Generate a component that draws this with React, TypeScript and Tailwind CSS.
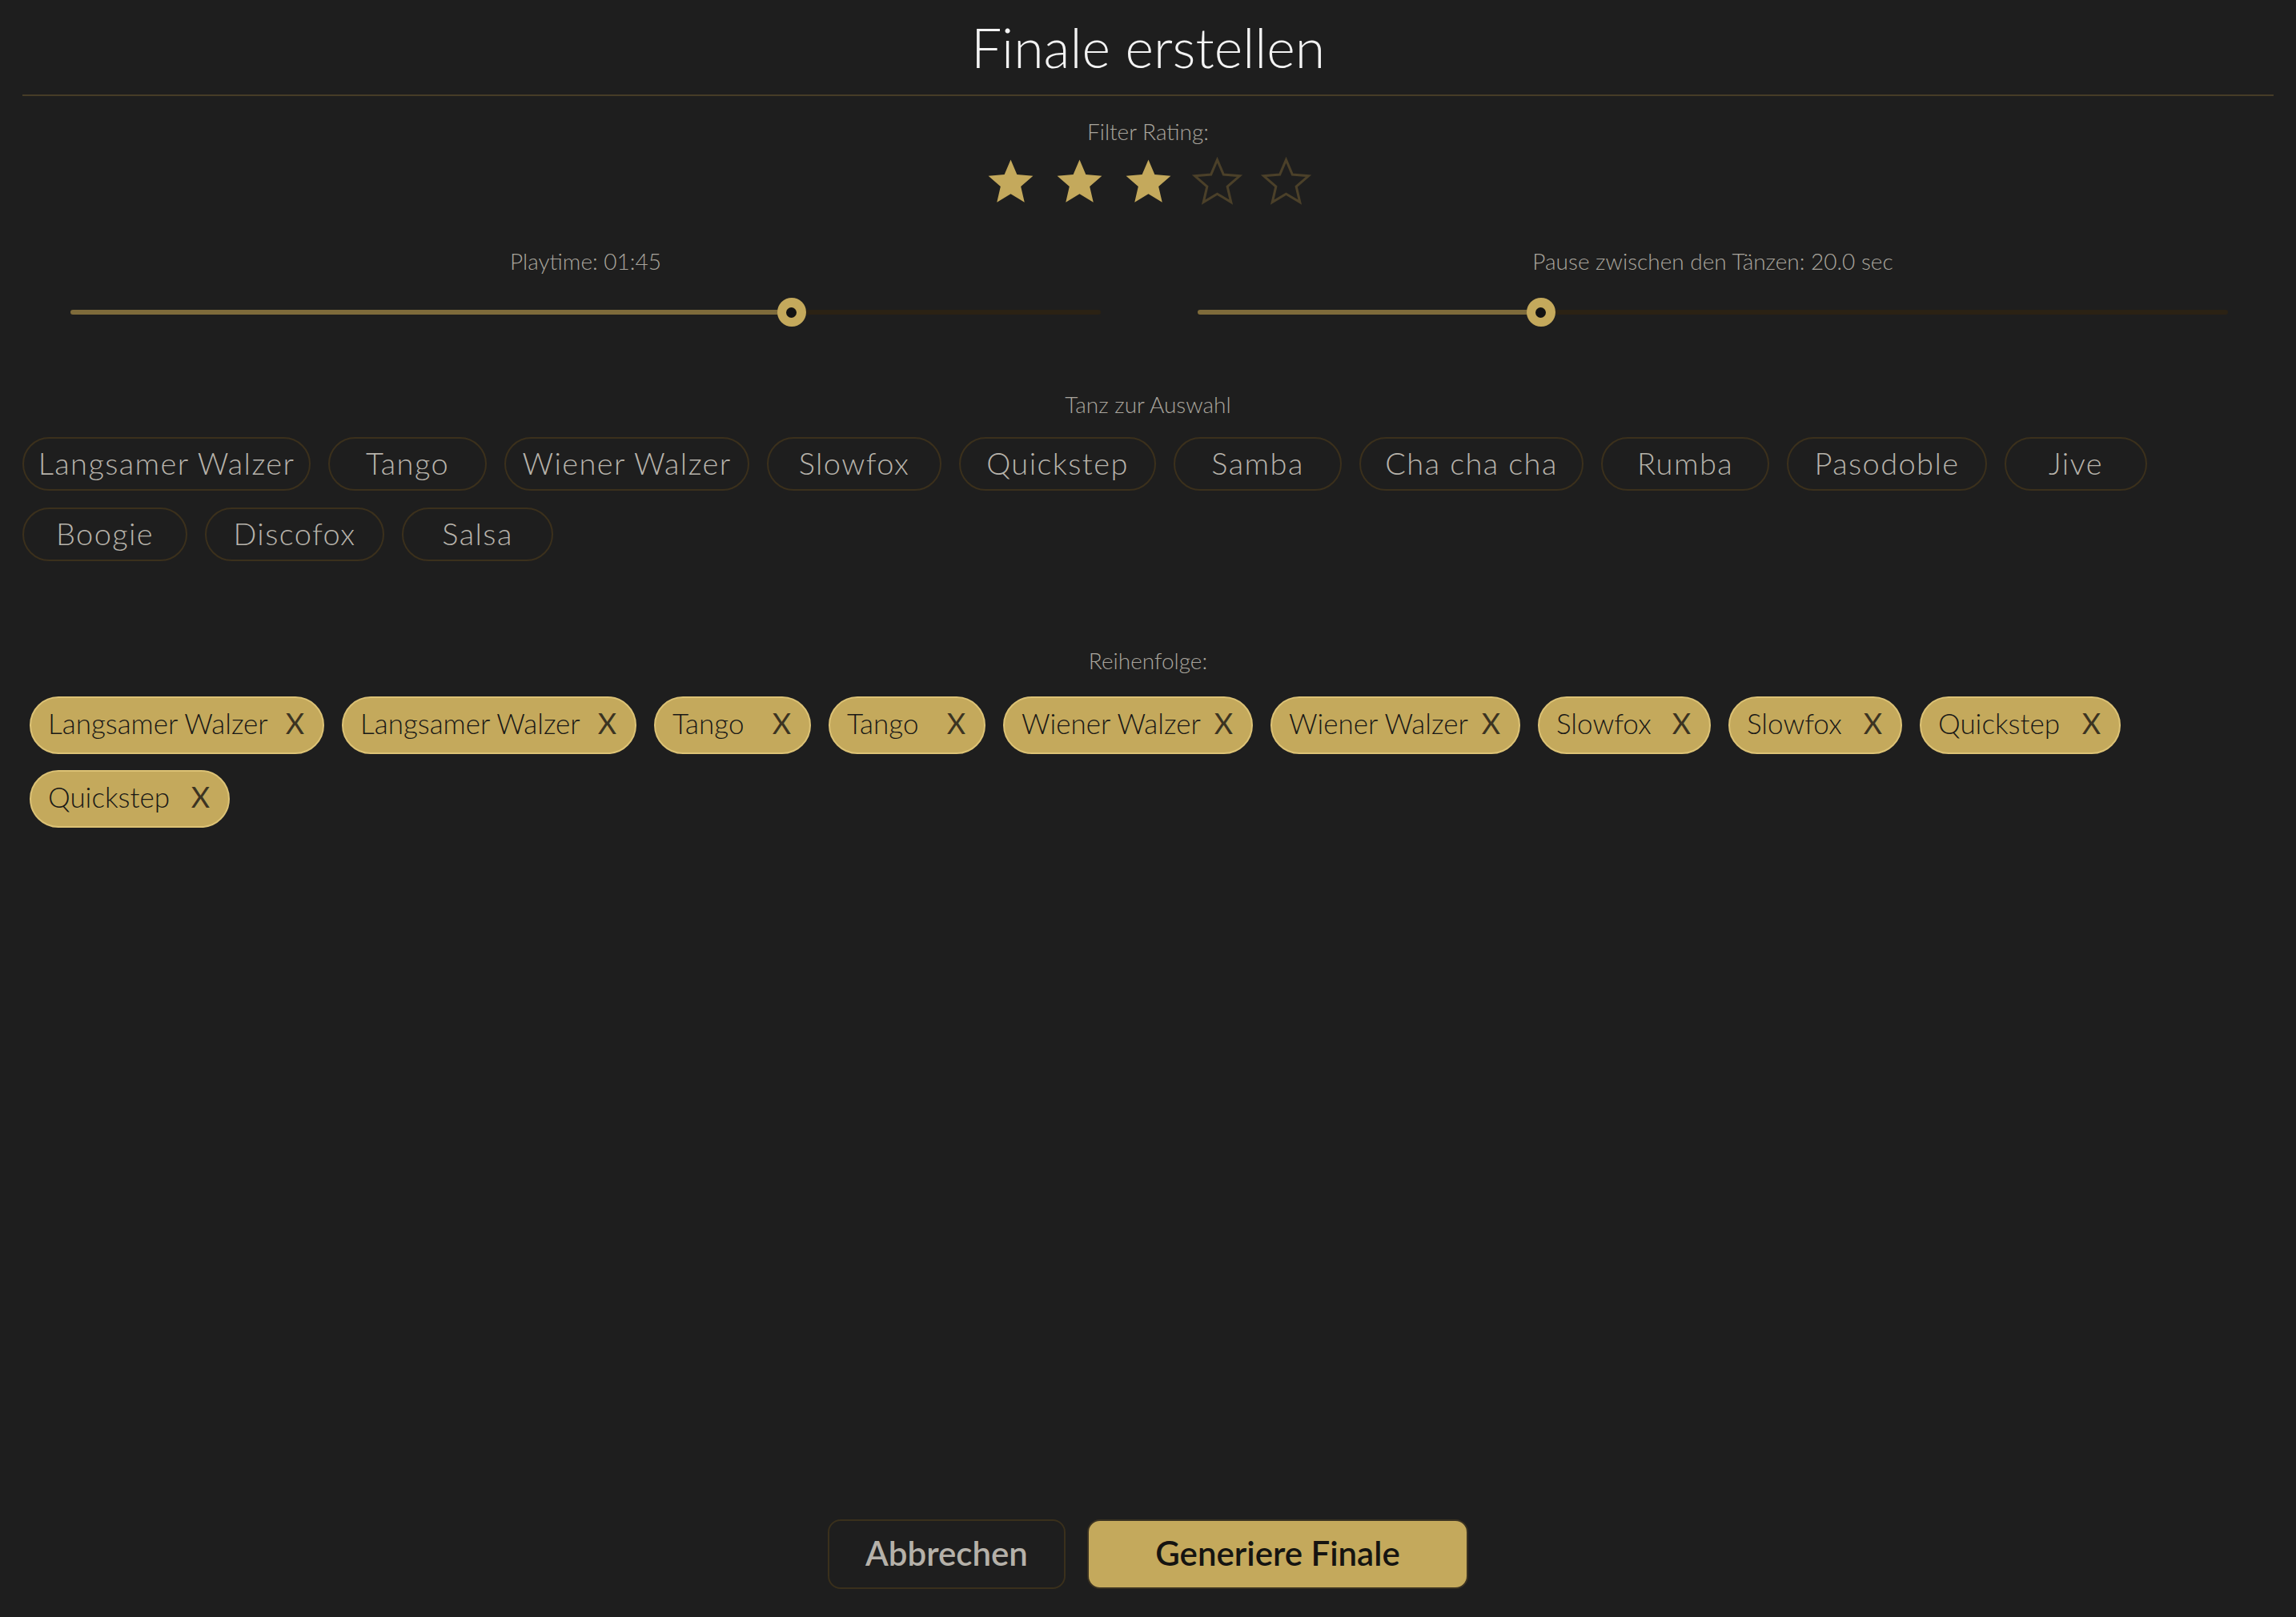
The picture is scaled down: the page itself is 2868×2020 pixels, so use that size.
import React from "react";

const STAR = "M12 17.27 18.18 21l-1.64-7.03L22 9.24l-7.19-.61L12 2 9.19 8.63 2 9.24l5.46 4.73L5.82 21z";

function Star({ filled }: { filled: boolean }) {
  return (
    <svg viewBox="0 0 24 24" className="h-[67px] w-[67px] overflow-visible">
      {filled ? (
        <path d={STAR} fill="#c4a95c" />
      ) : (
        <path d={STAR} fill="none" stroke="#4b4029" strokeWidth={1.1} strokeLinejoin="miter" strokeMiterlimit={10} />
      )}
    </svg>
  );
}

function Slider({ label, pct }: { label: string; pct: number }) {
  return (
    <div className="flex flex-col items-center">
      <div className="text-[28px] leading-[32px] font-light text-[#a9a59d]">{label}</div>
      <div className="relative mt-[30px] flex h-[36px] w-full items-center">
        <div className="h-[6px] w-full overflow-hidden rounded-full bg-[#2b2214]">
          <div className="h-full bg-[#7e6b3b]" style={{ width: pct + "%" }} />
        </div>
        <div
          className="absolute top-0 -ml-[18px] flex h-[36px] w-[36px] items-center justify-center rounded-full bg-[#c4a95c]"
          style={{ left: pct + "%" }}
        >
          <div className="h-[13px] w-[13px] rounded-full bg-[#121212]" />
        </div>
      </div>
    </div>
  );
}

const dances: { name: string; w: string }[] = [
  { name: "Langsamer Walzer", w: "w-[360px]" },
  { name: "Tango", w: "w-[198px]" },
  { name: "Wiener Walzer", w: "w-[306px]" },
  { name: "Slowfox", w: "w-[218px]" },
  { name: "Quickstep", w: "w-[246px]" },
  { name: "Samba", w: "w-[210px]" },
  { name: "Cha cha cha", w: "w-[280px]" },
  { name: "Rumba", w: "w-[210px]" },
  { name: "Pasodoble", w: "w-[250px]" },
  { name: "Jive", w: "w-[178px]" },
  { name: "Boogie", w: "w-[206px]" },
  { name: "Discofox", w: "w-[224px]" },
  { name: "Salsa", w: "w-[189px]" },
];

const order: { name: string; w: string }[] = [
  { name: "Langsamer Walzer", w: "w-[368px]" },
  { name: "Langsamer Walzer", w: "w-[368px]" },
  { name: "Tango", w: "w-[196px]" },
  { name: "Tango", w: "w-[196px]" },
  { name: "Wiener Walzer", w: "w-[312px]" },
  { name: "Wiener Walzer", w: "w-[312px]" },
  { name: "Slowfox", w: "w-[216px]" },
  { name: "Slowfox", w: "w-[217px]" },
  { name: "Quickstep", w: "w-[251px]" },
  { name: "Quickstep", w: "w-[250px]" },
];

export default function App() {
  return (
    <div
      className="flex h-[2020px] flex-col bg-[#1e1e1e] px-[28px]"
      style={{ fontFamily: "Lato, 'Noto Sans', sans-serif" }}
    >
      <div className="flex h-[120px] items-center justify-center border-b-2 border-[#463c27]">
        <h1 className="text-[68px] leading-none font-light text-[#f3f3f3]">Finale erstellen</h1>
      </div>

      <div className="mt-[28px] flex flex-col items-center">
        <div className="text-[28px] leading-[32px] font-light text-[#a9a59d]">Filter Rating:</div>
        <div className="mt-[14px] flex gap-[19px]">
          {[1, 2, 3, 4, 5].map((i) => (
            <Star key={i} filled={i <= 3} />
          ))}
        </div>
      </div>

      <div className="mt-[49px] grid grid-cols-2 gap-x-[121px] pl-[60px] pr-[57px]">
        <Slider label="Playtime: 01:45" pct={70} />
        <Slider label="Pause zwischen den Tänzen: 20.0 sec" pct={33.33} />
      </div>

      <div className="mt-[81px] text-center text-[28px] leading-[32px] font-light text-[#a9a59d]">
        Tanz zur Auswahl
      </div>
      <div className="mt-[25px] flex flex-wrap gap-x-[22px] gap-y-[21px]">
        {dances.map((d) => (
          <div
            key={d.name}
            className={
              "flex h-[67px] items-center justify-center rounded-full border-2 border-[#3b301c] pb-[3px] text-[38px] tracking-[1.4px] font-light text-[#b7b3ab] " +
              d.w
            }
          >
            {d.name}
          </div>
        ))}
      </div>

      <div className="mt-[108px] text-center text-[28px] leading-[32px] font-light text-[#a9a59d]">
        Reihenfolge:
      </div>
      <div className="mt-[29px] flex flex-wrap gap-x-[22px] gap-y-[20px] pl-[9px]">
        {order.map((d, i) => (
          <div
            key={i}
            className={
              "flex h-[72px] items-center justify-between rounded-full border-2 border-[#dcc275] bg-[#c4a95c] pb-[6px] pl-[21px] pr-[23px] text-[35px] " +
              d.w
            }
          >
            <span className="font-light text-[#191816]">{d.name}</span>
            <span className="text-[36px] text-[#3c3422]">X</span>
          </div>
        ))}
      </div>

      <div className="mt-auto mb-[35px] flex justify-center gap-[27px]">
        <button className="flex h-[87px] w-[297px] items-center justify-center rounded-[16px] border-2 border-[#3a301c] pb-[2px] text-[42px] font-semibold text-[#b5b1a9]">
          Abbrechen
        </button>
        <button className="flex h-[87px] w-[476px] items-center justify-center rounded-[16px] border-2 border-[#3a3222] bg-[#c4a95c] pb-[2px] text-[42px] font-semibold text-[#151411]">
          Generiere Finale
        </button>
      </div>
    </div>
  );
}
